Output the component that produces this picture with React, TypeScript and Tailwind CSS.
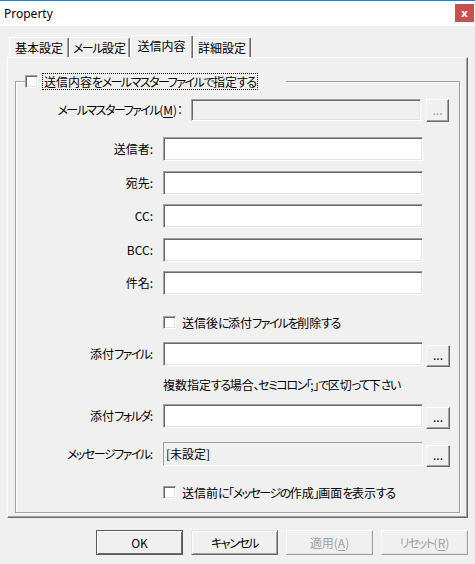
import React from "react";

const FONT = "font-['Noto_Sans_CJK_JP',sans-serif] [font-feature-settings:'palt']";
const sunken =
  "border border-t-[#a0a0a0] border-l-[#a0a0a0] border-r-white border-b-white shadow-[inset_1px_1px_0_#696969,inset_-1px_-1px_0_#e3e3e3]";
const raised =
  "border border-t-white border-l-white border-r-[#696969] border-b-[#696969] shadow-[inset_-1px_-1px_0_#a0a0a0] bg-[#f0f0f0]";

function J({ t }: { t: string }) {
  const parts = t.split(/([\u3040-\u30ff\u3000-\u303f\uff01-\uff60]+)/);
  return (
    <>
      {parts.map((p, i) =>
        i % 2 === 1 ? (
          <span key={i} className="tracking-[-1.5px]">
            {p}
          </span>
        ) : (
          <React.Fragment key={i}>{p}</React.Fragment>
        )
      )}
    </>
  );
}

function Check() {
  return <div className={`w-[13px] h-[13px] bg-white shrink-0 ${sunken}`} />;
}

function Dots({ disabled }: { disabled?: boolean }) {
  return (
    <div
      className={`w-[24px] h-[22px] flex items-center justify-center text-[12px] leading-[12px] ${raised} ${
        disabled ? "text-[#a0a0a0]" : "text-black"
      }`}
    >
      <span className="pb-[2px]">...</span>
    </div>
  );
}

function FieldRow({
  label,
  mt,
  gray,
  value,
  btn,
}: {
  label: string;
  mt: string;
  gray?: boolean;
  value?: string;
  btn?: boolean;
}) {
  return (
    <div className={`flex items-start h-[25px] ${mt}`}>
      <div className="w-[137px] h-[24px] flex items-center justify-end text-[12px] leading-[16px]">
        <J t={label} />
      </div>
      <div
        className={`ml-[10px] w-[260px] h-[24px] flex items-center pl-[2px] text-[12px] leading-[16px] ${
          gray
            ? "bg-[#f0f0f0] border border-t-[#a0a0a0] border-l-[#a0a0a0] border-r-white border-b-white"
            : `bg-white ${sunken}`
        }`}
      >
        {value && <J t={value} />}
      </div>
      {btn && (
        <div className="ml-[3px] self-end">
          <Dots />
        </div>
      )}
    </div>
  );
}

function SimpleRow({ label, mt }: { label: string; mt: string }) {
  return (
    <div className={`flex items-center h-[24px] ${mt}`}>
      <div className="w-[137px] text-right text-[12px] leading-[16px]">
        <J t={label} />
      </div>
      <div className={`ml-[10px] w-[260px] h-[24px] bg-white ${sunken}`} />
    </div>
  );
}

function Tab({ label, w, active }: { label: string; w: string; active?: boolean }) {
  if (active) {
    return (
      <div
        className={`${w} h-[23px] mb-[-1px] relative z-10 bg-[#f0f0f0] border-t border-l border-r border-t-white border-l-white border-r-[#696969] shadow-[inset_-1px_0_0_#a0a0a0] rounded-t-[2px] flex items-center justify-center pb-[3px] text-[12px] leading-[16px]`}
      >
        <J t={label} />
      </div>
    );
  }
  return (
    <div
      className={`${w} h-[20px] border-t border-l border-r border-t-white border-l-white border-r-[#696969] shadow-[inset_-1px_0_0_#a0a0a0] rounded-t-[2px] flex items-center justify-center text-[12px] leading-[16px]`}
    >
      <J t={label} />
    </div>
  );
}

function BigButton({
  label,
  def,
  disabled,
}: {
  label: React.ReactNode;
  def?: boolean;
  disabled?: boolean;
}) {
  const cls = def
    ? "border border-[#5a5a5a] shadow-[inset_1px_1px_0_#fff,inset_-1px_-1px_0_#696969] text-black"
    : disabled
    ? "border border-t-white border-l-white border-r-[#a0a0a0] border-b-[#a0a0a0] shadow-[inset_-1px_-1px_0_#e3e3e3] text-[#a0a0a0]"
    : "border border-t-[#e3e3e3] border-l-[#e3e3e3] border-r-[#696969] border-b-[#696969] shadow-[inset_1px_1px_0_#fff,inset_-1px_-1px_0_#a0a0a0] text-black";
  return (
    <div
      className={`w-[87px] h-[25px] bg-[#f0f0f0] flex items-center justify-center text-[12px] leading-[16px] ${cls}`}
    >
      {label}
    </div>
  );
}

export default function App() {
  return (
    <div className={`w-[475px] h-[564px] bg-[#f0f0f0] flex flex-col text-black ${FONT}`}>
      {/* Title bar */}
      <div className="h-[26px] bg-white border-t border-[#1883d7] flex items-start justify-between shrink-0">
        <div className="pl-[4px] pt-[5px] text-[12px] leading-[16px] font-['Noto_Sans',sans-serif]">
          Property
        </div>
        <div className="mt-[3px] mr-[1px] w-[19px] h-[18px] bg-[#c75050] flex items-center justify-center text-white text-[11px] font-bold leading-none font-['Noto_Sans',sans-serif] pb-[2px]">
          x
        </div>
      </div>

      {/* Tab control */}
      <div className="px-[7px] pt-[9px]">
        <div className="flex items-end h-[22px] pl-[2px]">
          <Tab label="基本設定" w="w-[60px]" />
          <Tab label="メール設定" w="w-[61px]" />
          <Tab label="送信内容" w="w-[63px]" active />
          <Tab label="詳細設定" w="w-[58px]" />
        </div>
        <div className="w-[461px] h-[461px] border-t border-l border-r border-b border-t-white border-l-white border-r-[#696969] border-b-[#696969] shadow-[inset_-1px_-1px_0_#a0a0a0] pl-[7px] pt-[23px]">
          {/* Group box */}
          <div className="relative w-[445px] h-[432px] border border-[#a0a0a0] shadow-[1px_1px_0_#fff,inset_1px_1px_0_#fff]">
            {/* legend */}
            <div className="absolute left-[9px] top-[-9px] w-[261px] h-[17px] bg-[#f0f0f0] flex items-center">
              <Check />
              <div className="ml-[4px] h-[17px] border border-dotted border-black px-[1px] flex items-center text-[12px] leading-[15px]">
                <J t="送信内容をメールマスターファイルで指定する" />
              </div>
            </div>

            <div className="flex flex-col">
              {/* MM row */}
              <div className="flex items-start mt-[17px] h-[23px]">
                <div className="w-[167px] h-[22px] flex items-center justify-end text-[12px] leading-[16px]">
                  <J t="メールマスターファイル" />(<span className="underline underline-offset-2">M</span>)：
                </div>
                <div className={`ml-[8px] w-[230px] h-[22px] bg-[#f0f0f0] ${sunken}`} />
                <div className="ml-[5px]">
                  <div
                    className={`w-[23px] h-[23px] flex items-center justify-center text-[12px] leading-[12px] text-[#a0a0a0] ${raised}`}
                  >
                    <span className="pb-[2px]">...</span>
                  </div>
                </div>
              </div>

              <SimpleRow label="送信者:" mt="mt-[15px]" />
              <SimpleRow label="宛先:" mt="mt-[10px]" />
              <SimpleRow label="CC:" mt="mt-[9px]" />
              <SimpleRow label="BCC:" mt="mt-[10px]" />
              <SimpleRow label="件名:" mt="mt-[9px]" />

              {/* checkbox 1 */}
              <div className="flex items-center h-[13px] mt-[21px] pl-[147px]">
                <Check />
                <span className="ml-[6px] text-[12px] leading-[16px]">
                  <J t="送信後に添付ファイルを削除する" />
                </span>
              </div>

              <FieldRow label="添付ファイル:" mt="mt-[13px]" btn />

              <div className="mt-[10px] h-[16px] pl-[147px] text-[12px] leading-[16px]">
                <J t="複数指定する場合、セミコロン「;」で区切って下さい" />
              </div>

              <FieldRow label="添付フォルダ:" mt="mt-[11px]" btn />

              <FieldRow label="メッセージファイル:" mt="mt-[13px]" gray value="[未設定]" btn />

              {/* checkbox 2 */}
              <div className="flex items-center h-[13px] mt-[19px] pl-[147px]">
                <Check />
                <span className="ml-[6px] text-[12px] leading-[16px]">
                  <J t="送信前に「メッセージの作成」画面を表示する" />
                </span>
              </div>
            </div>
          </div>
        </div>
      </div>

      {/* bottom buttons */}
      <div className="flex justify-end gap-[8px] pr-[7px] mt-[12px]">
        <BigButton label="OK" def />
        <BigButton label={<J t="キャンセル" />} />
        <BigButton
          label={
            <span>
              適用(<span className="underline underline-offset-2">A</span>)
            </span>
          }
          disabled
        />
        <BigButton
          label={
            <span>
              <J t="リセット" />(<span className="underline underline-offset-2">R</span>)
            </span>
          }
          disabled
        />
      </div>
    </div>
  );
}
